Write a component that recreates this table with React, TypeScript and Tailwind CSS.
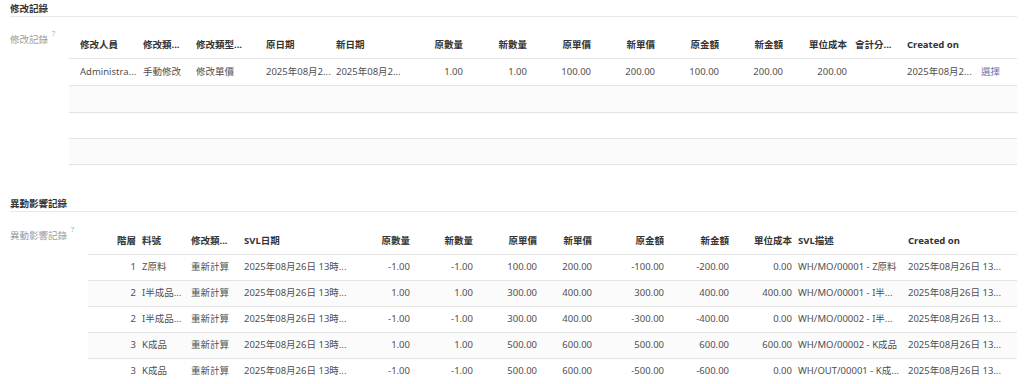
import React from "react";

type Col = { w: string; right?: boolean; pl?: string; pr?: string };

const cols1: Col[] = [
  { w: "w-[70px]", pl: "pl-[11px]", pr: "pr-[4px]" },
  { w: "w-[53px]" },
  { w: "w-[70px]" },
  { w: "w-[70px]" },
  { w: "w-[68px]" },
  { w: "w-[67px]", right: true },
  { w: "w-[64px]", right: true },
  { w: "w-[64px]", right: true },
  { w: "w-[64px]", right: true },
  { w: "w-[64px]", right: true },
  { w: "w-[64px]", right: true },
  { w: "w-[64px]", right: true },
  { w: "w-[52px]" },
  { w: "w-[69px]" },
  { w: "w-[45px]", pl: "pl-[9px]", pr: "pr-[4px]" },
];

const head1 = [
  "修改人員",
  "修改類...",
  "修改類型...",
  "原日期",
  "新日期",
  "原數量",
  "新數量",
  "原單價",
  "新單價",
  "原金額",
  "新金額",
  "單位成本",
  "會計分...",
  "Created on",
  "",
];

const row1 = [
  "Administra...",
  "手動修改",
  "修改單價",
  "2025年08月2...",
  "2025年08月2...",
  "1.00",
  "1.00",
  "100.00",
  "200.00",
  "100.00",
  "200.00",
  "200.00",
  "",
  "2025年08月2...",
];

const cols2: Col[] = [
  { w: "w-[51px]", right: true },
  { w: "w-[49px]" },
  { w: "w-[53px]" },
  { w: "w-[107px]" },
  { w: "w-[65px]", right: true },
  { w: "w-[63px]", right: true },
  { w: "w-[64px]", right: true },
  { w: "w-[55px]", right: true },
  { w: "w-[72px]", right: true },
  { w: "w-[65px]", right: true },
  { w: "w-[63px]", right: true },
  { w: "w-[110px]" },
  { w: "w-[112px]" },
];

const head2 = [
  "階層",
  "料號",
  "修改類...",
  "SVL日期",
  "原數量",
  "新數量",
  "原單價",
  "新單價",
  "原金額",
  "新金額",
  "單位成本",
  "SVL描述",
  "Created on",
];

const d = "2025年08月26日 13時...";
const c = "2025年08月26日 13...";
const rows2 = [
  ["1", "Z原料", "重新計算", d, "-1.00", "-1.00", "100.00", "200.00", "-100.00", "-200.00", "0.00", "WH/MO/00001 - Z原料", c],
  ["2", "I半成品...", "重新計算", d, "1.00", "1.00", "300.00", "400.00", "300.00", "400.00", "400.00", "WH/MO/00001 - I半...", c],
  ["2", "I半成品...", "重新計算", d, "-1.00", "-1.00", "300.00", "400.00", "-300.00", "-400.00", "0.00", "WH/MO/00002 - I半...", c],
  ["3", "K成品", "重新計算", d, "1.00", "1.00", "500.00", "600.00", "500.00", "600.00", "600.00", "WH/MO/00002 - K成品", c],
  ["3", "K成品", "重新計算", d, "-1.00", "-1.00", "500.00", "600.00", "-500.00", "-600.00", "0.00", "WH/OUT/00001 - K成...", c],
];

function Cell({
  col,
  children,
  pl,
  pr,
}: {
  col: Col;
  children: React.ReactNode;
  pl: string;
  pr: string;
}) {
  return (
    <div
      className={`${col.w} shrink-0 overflow-hidden whitespace-nowrap ${col.pl ?? pl} ${col.pr ?? pr} ${
        col.right ? "text-right" : "text-left"
      }`}
    >
      {children}
    </div>
  );
}

function SectionTitle({ children, className }: { children: React.ReactNode; className?: string }) {
  return (
    <div className={`pt-[2px] leading-[14px] border-b border-[#e8e8e8] font-bold text-[#333333] ${className ?? ""}`}>
      {children}
    </div>
  );
}

function FieldLabel({ children, w }: { children: React.ReactNode; w: string }) {
  return (
    <div className={`${w} shrink-0 leading-[14px] text-[#9a9a9a] whitespace-nowrap`}>
      {children}
      <sup className="ml-[4px] text-[7px] text-[#8fb0d6] align-[4px]">?</sup>
    </div>
  );
}

export default function App() {
  return (
    <div className="w-[1024px] h-[384px] overflow-hidden bg-white pl-[10px] pr-[7px] font-['Noto_Sans','Noto_Sans_CJK_TC',sans-serif] text-[9.5px] text-[#505050]">
      <SectionTitle>修改記錄</SectionTitle>

      <div className="flex mt-[16px]">
        <FieldLabel w="w-[59px]">修改記錄</FieldLabel>
        <div className="flex-1">
          <div className="flex h-[26px] items-center border-b border-[#e3e3e3] font-bold text-[#333333]">
            {head1.map((h, i) => (
              <Cell key={i} col={cols1[i]} pl="pl-[4px]" pr="pr-[4px]">
                {h}
              </Cell>
            ))}
          </div>
          <div className="flex h-[27px] items-center border-b border-[#e3e3e3] bg-white">
            {row1.map((v, i) => (
              <Cell key={i} col={cols1[i]} pl="pl-[4px]" pr="pr-[4px]">
                {v}
              </Cell>
            ))}
            <Cell col={cols1[14]} pl="pl-[4px]" pr="pr-[4px]">
              <span className="text-[#7b6fa6]">選擇</span>
            </Cell>
          </div>
          <div className="h-[27px] border-b border-[#e3e3e3] bg-[#fbfbfb]" />
          <div className="h-[26px] border-b border-[#e3e3e3] bg-white" />
          <div className="h-[26px] border-b border-[#e3e3e3] bg-[#fbfbfb]" />
        </div>
      </div>

      <SectionTitle className="mt-[30px]">異動影響記錄</SectionTitle>

      <div className="flex mt-[17px]">
        <FieldLabel w="w-[78px]">異動影響記錄</FieldLabel>
        <div className="flex-1">
          <div className="flex h-[26px] items-center border-b border-[#e3e3e3] font-bold text-[#333333]">
            {head2.map((h, i) => (
              <Cell key={i} col={cols2[i]} pl="pl-[3px]" pr="pr-[3px]">
                {h}
              </Cell>
            ))}
          </div>
          {rows2.map((r, ri) => (
            <div
              key={ri}
              className={`flex h-[26px] items-center border-b border-[#e3e3e3] ${
                ri % 2 === 1 ? "bg-[#fbfbfb]" : "bg-white"
              }`}
            >
              {r.map((v, i) => (
                <Cell key={i} col={cols2[i]} pl="pl-[3px]" pr="pr-[3px]">
                  {v}
                </Cell>
              ))}
            </div>
          ))}
        </div>
      </div>
    </div>
  );
}
